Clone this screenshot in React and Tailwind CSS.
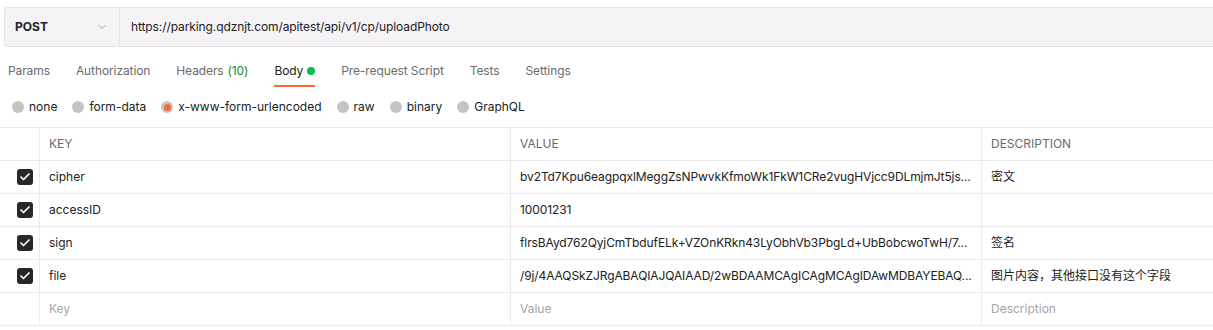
import { ChevronDown, Check } from 'lucide-react';

const TABS = [
  { label: 'Params' },
  { label: 'Authorization' },
  { label: 'Headers', count: '(10)' },
  { label: 'Body', active: true, dot: true },
  { label: 'Pre-request Script' },
  { label: 'Tests' },
  { label: 'Settings' },
];

const BODY_TYPES = [
  { label: 'none' },
  { label: 'form-data' },
  { label: 'x-www-form-urlencoded', selected: true },
  { label: 'raw' },
  { label: 'binary' },
  { label: 'GraphQL' },
];

const ROWS = [
  {
    key: 'cipher',
    value: 'bv2Td7Kpu6eagpqxlMeggZsNPwvkKfmoWk1FkW1CRe2vugHVjcc9DLmjmJt5js...',
    desc: '密文',
  },
  { key: 'accessID', value: '10001231', desc: '' },
  {
    key: 'sign',
    value: 'flrsBAyd762QyjCmTbdufELk+VZOnKRkn43LyObhVb3PbgLd+UbBobcwoTwH/7...',
    desc: '签名',
  },
  {
    key: 'file',
    value: '/9j/4AAQSkZJRgABAQIAJQAIAAD/2wBDAAMCAgICAgMCAgIDAwMDBAYEBAQ...',
    desc: '图片内容，其他接口没有这个字段',
  },
];

const Checkbox = () => (
  <div className="w-4 h-4 rounded-[3px] bg-[#282828] flex items-center justify-center">
    <Check size={12} strokeWidth={3.5} className="text-white" />
  </div>
);

const Radio = ({ selected }) =>
  selected ? (
    <span className="w-3 h-3 rounded-full bg-[#c4c4c4] flex items-center justify-center shrink-0">
      <span className="w-[7px] h-[7px] rounded-full bg-[#f26b3a]" />
    </span>
  ) : (
    <span className="w-3 h-3 rounded-full bg-[#c4c4c4] shrink-0" />
  );

export default function App() {
  return (
    <div
      className="w-[1213px] h-[330px] bg-white text-[12px] text-[#212121] overflow-hidden"
      style={{ fontFamily: 'Inter, "Noto Sans CJK SC", sans-serif' }}
    >
      {/* url bar */}
      <div className="pt-[7px] pl-1">
        <div className="flex h-[40px] bg-[#f6f3f6] border border-[#e3e3e3] rounded-l-[4px] border-r-0">
          <div className="w-[115px] flex items-center justify-between pl-[10px] pr-[11px] border-r border-[#e3e3e3]">
            <span className="font-bold text-[12px] text-[#212121]">POST</span>
            <ChevronDown size={12} strokeWidth={1.5} className="text-[#8a8a8a]" />
          </div>
          <div className="flex items-center pl-[11px] text-[12px] text-[#212121] tracking-[-0.1px]">
            https://parking.qdznjt.com/apitest/api/v1/cp/uploadPhoto
          </div>
        </div>
      </div>

      {/* tabs */}
      <div className="flex gap-[26px] pl-2 mt-[9px] h-[31px] tracking-[-0.1px]">
        {TABS.map(t => (
          <div
            key={t.label}
            className={`flex items-center gap-1 h-full border-b-2 ${
              t.active ? 'border-[#f26b3a] text-[#212121]' : 'border-transparent text-[#6b6b6b]'
            }`}
          >
            <span>{t.label}</span>
            {t.count && <span className="text-[#0a8a3d]">{t.count}</span>}
            {t.dot && <span className="w-2 h-2 rounded-full bg-[#0cbb52]" />}
          </div>
        ))}
      </div>

      {/* body types */}
      <div className="flex items-center gap-[15px] pl-3 h-[40px]">
        {BODY_TYPES.map(b => (
          <div key={b.label} className="flex items-center gap-[5px] text-[#212121]">
            <Radio selected={b.selected} />
            <span>{b.label}</span>
          </div>
        ))}
      </div>

      {/* table */}
      <div className="border-t border-[#ebebeb]">
        <div className="grid grid-cols-[40px_471px_471px_1fr] h-[33px] border-b border-[#ebebeb] text-[12px] text-[#6b6b6b]">
          <div className="border-r border-[#ebebeb]" />
          <div className="flex items-center pl-[9px] border-r border-[#ebebeb]">KEY</div>
          <div className="flex items-center pl-[9px] border-r border-[#ebebeb]">VALUE</div>
          <div className="flex items-center pl-[9px]">DESCRIPTION</div>
        </div>
        {ROWS.map(r => (
          <div
            key={r.key}
            className="grid grid-cols-[40px_471px_471px_1fr] h-[33px] border-b border-[#ebebeb]"
          >
            <div className="flex items-center justify-end pr-[6px] border-r border-[#ebebeb]">
              <Checkbox />
            </div>
            <div className="flex items-center pl-[9px] border-r border-[#ebebeb]">{r.key}</div>
            <div className="flex items-center pl-[9px] border-r border-[#ebebeb] min-w-0">
              <span className="truncate tracking-[-0.1px]">{r.value}</span>
            </div>
            <div className="flex items-center pl-[9px]">{r.desc}</div>
          </div>
        ))}
        <div className="grid grid-cols-[40px_471px_471px_1fr] h-[33px] border-b border-[#ebebeb] text-[#a6a6a6]">
          <div className="border-r border-[#ebebeb]" />
          <div className="flex items-center pl-[9px] border-r border-[#ebebeb]">Key</div>
          <div className="flex items-center pl-[9px] border-r border-[#ebebeb]">Value</div>
          <div className="flex items-center pl-[9px]">Description</div>
        </div>
      </div>
    </div>
  );
}
